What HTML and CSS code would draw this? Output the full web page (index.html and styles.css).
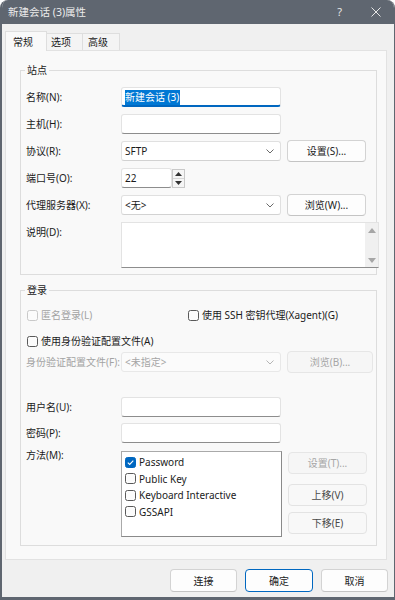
FILE: index.html
```html
<!DOCTYPE html>
<html lang="zh-CN">
<head>
<meta charset="utf-8">
<title>新建会话 (3)属性</title>
<link rel="stylesheet" href="styles.css">
</head>
<body>
<div class="window">
  <div class="titlebar">
    <span class="title">新建会话 (3)属性</span>
    <span class="tb-help">?</span>
    <svg class="tb-close" width="10" height="10" viewBox="0 0 10 10"><path d="M0.5 0.5 L9.5 9.5 M9.5 0.5 L0.5 9.5" stroke="#e6e6e6" stroke-width="1" fill="none"/></svg>
  </div>
  <div class="body">
    <div class="tabs">
      <div class="tab active">常规</div>
      <div class="tab t2">选项</div>
      <div class="tab t3">高级</div>
    </div>
    <div class="panel">
      <fieldset class="group site">
        <legend>站点</legend>
        <div class="row">
          <span class="lbl">名称(N):</span>
          <div class="field w160 focused"><span class="selected">新建会话 (3)</span></div>
        </div>
        <div class="row">
          <span class="lbl">主机(H):</span>
          <div class="field w160"></div>
        </div>
        <div class="row">
          <span class="lbl">协议(R):</span>
          <div class="select w160"><span class="val">SFTP</span><svg class="chev" width="8" height="5" viewBox="0 0 8 5"><path d="M0.5 0.5 L4 4 L7.5 0.5" stroke="#6a6a6a" fill="none" stroke-width="1"/></svg></div>
          <div class="btn side">设置(S)...</div>
        </div>
        <div class="row">
          <span class="lbl">端口号(O):</span>
          <div class="field w51">22</div>
          <div class="spin">
            <div class="spin-half"><svg width="7" height="4" viewBox="0 0 7 4"><path d="M0 4 L3.5 0 L7 4 Z" fill="#333"/></svg></div>
            <div class="spin-half"><svg width="7" height="4" viewBox="0 0 7 4"><path d="M0 0 L3.5 4 L7 0 Z" fill="#333"/></svg></div>
          </div>
        </div>
        <div class="row">
          <span class="lbl">代理服务器(X):</span>
          <div class="select w160"><span class="val">&lt;无&gt;</span><svg class="chev" width="8" height="5" viewBox="0 0 8 5"><path d="M0.5 0.5 L4 4 L7.5 0.5" stroke="#6a6a6a" fill="none" stroke-width="1"/></svg></div>
          <div class="btn side">浏览(W)...</div>
        </div>
        <div class="row tall">
          <span class="lbl top">说明(D):</span>
          <div class="textarea">
            <div class="ta-text"></div>
            <div class="scrollbar">
              <svg width="8" height="5" viewBox="0 0 8 5"><path d="M0 5 L4 0 L8 5 Z" fill="#a6a6a6"/></svg>
              <svg width="8" height="5" viewBox="0 0 8 5"><path d="M0 0 L4 5 L8 0 Z" fill="#a6a6a6"/></svg>
            </div>
          </div>
        </div>
      </fieldset>

      <fieldset class="group login">
        <legend>登录</legend>
        <div class="row chk-row first">
          <label class="check disabled w162"><span class="box"></span>匿名登录(L)</label>
          <label class="check"><span class="box"></span>使用 SSH 密钥代理(Xagent)(G)</label>
        </div>
        <div class="row chk-row r-profile">
          <label class="check"><span class="box"></span>使用身份验证配置文件(A)</label>
        </div>
        <div class="row r-profsel">
          <span class="lbl disabled-text">身份验证配置文件(F):</span>
          <div class="select w160 disabled"><span class="val">&lt;未指定&gt;</span><svg class="chev" width="8" height="5" viewBox="0 0 8 5"><path d="M0.5 0.5 L4 4 L7.5 0.5" stroke="#b5b5b5" fill="none" stroke-width="1"/></svg></div>
          <div class="btn side wide disabled">浏览(B)...</div>
        </div>
        <div class="row r-user">
          <span class="lbl">用户名(U):</span>
          <div class="field w160"></div>
        </div>
        <div class="row r-pass">
          <span class="lbl">密码(P):</span>
          <div class="field w160"></div>
        </div>
        <div class="row r-method">
          <span class="lbl top-up">方法(M):</span>
          <div class="listbox">
            <div class="item"><span class="box checked"><svg width="9" height="9" viewBox="0 0 9 9"><path d="M1.8 4.6 L3.7 6.4 L7.3 2.6" stroke="#fff" stroke-width="1.1" fill="none"/></svg></span>Password</div>
            <div class="item"><span class="box"></span>Public Key</div>
            <div class="item"><span class="box"></span>Keyboard Interactive</div>
            <div class="item"><span class="box"></span>GSSAPI</div>
          </div>
          <div class="side-col">
            <div class="btn side disabled">设置(T)...</div>
            <div class="btn side muted b-up">上移(V)</div>
            <div class="btn side muted b-down">下移(E)</div>
          </div>
        </div>
      </fieldset>
    </div>
    <div class="footer">
      <div class="btn foot">连接</div>
      <div class="btn foot primary">确定</div>
      <div class="btn foot">取消</div>
    </div>
  </div>
</div>
</body>
</html>
```

FILE: styles.css
```css
* { box-sizing: border-box; }
html, body { margin: 0; padding: 0; background: #ffffff; }
body {
  font-family: "Noto Sans", "Noto Sans CJK SC", sans-serif;
  font-size: 10px;
  line-height: 14px;
  color: #1b1b1b;
}

.window {
  width: 395px;
  height: 600px;
  display: flex;
  flex-direction: column;
  background: #f0f0f0;
  border-style: solid;
  border-color: #5f6670;
  border-width: 0 1px 3px 2px;
  border-radius: 8px 8px 0 0;
  overflow: hidden;
}

.titlebar {
  flex: none;
  height: 24px;
  background: #5f6670;
  color: #ececec;
  display: flex;
  align-items: center;
  padding-left: 6px;
}
.title { flex: 1; font-size: 10.5px; }
.tb-help { font-size: 11px; margin-right: 29px; color: #e6e6e6; }
.tb-close { margin-right: 13px; }

.body {
  flex: 1;
  display: flex;
  flex-direction: column;
  padding: 7px 7px 0 3px;
}

.tabs {
  display: flex;
  align-items: flex-end;
  height: 20px;
  margin-bottom: -1px;
}
.tab {
  height: 18px;
  line-height: 17px;
  border: 1px solid #dedede;
  border-bottom: none;
  background: #f4f4f4;
  padding-left: 4px;
  margin-left: -1px;
}
.tab.active {
  height: 20px;
  line-height: 20px;
  width: 42px;
  padding-left: 7px;
  background: #f9f9f9;
  margin-left: 0;
  position: relative;
  z-index: 1;
}
.tab.t2 { width: 37px; }
.tab.t3 { width: 38px; padding-left: 5px; }

.panel {
  flex: none;
  height: 510px;
  background: #f9f9f9;
  border: 1px solid #e2e2e2;
  padding: 12px 9px 0 14px;
}

.group {
  margin: 0;
  min-width: 0;
  border: 1px solid #dddddd;
  padding: 10px 0 6px 5px;
}
.group legend {
  padding: 0 2px;
  margin-left: -1px;
  line-height: 14px;
}
.group.login {
  margin-top: 8px;
  padding-top: 11px;
  padding-bottom: 8px;
}

.row {
  display: flex;
  align-items: center;
  height: 20px;
  margin-top: 7px;
}
.row:first-of-type { margin-top: 0; }
.row.tall { height: 46px; align-items: flex-start; }
.lbl { width: 95px; flex: none; white-space: nowrap; }
.lbl.top { padding-top: 3px; }
.lbl.top-up { margin-top: -3px; }

.field, .select {
  height: 20px;
  background: #ffffff;
  border: 1px solid #e3e3e3;
  border-bottom-color: #8d8d8d;
  border-radius: 3px;
  padding: 0 3px;
  display: flex;
  align-items: center;
  flex: none;
}
.w160 { width: 160px; }
.w51 { width: 51px; }
.field.focused {
  border-bottom: 2px solid #0067c0;
  padding-top: 1px;
}
.selected {
  background: #0078d4;
  color: #ffffff;
  line-height: 15px;
  padding: 0 1px 0 0;
}
.select {
  border-color: #e0e0e0;
  border-bottom-color: #d2d2d2;
  justify-content: space-between;
  padding-right: 6px;
}
.select.disabled { background: #fbfbfb; color: #a5a5a5; border-color: #e8e8e8; }

.spin {
  width: 13px;
  height: 19px;
  display: flex;
  flex-direction: column;
  border: 1px solid #c9c9c9;
  background: #f6f6f6;
  flex: none;
}
.spin-half {
  flex: 1;
  display: flex;
  align-items: center;
  justify-content: center;
}
.spin-half + .spin-half { border-top: 1px solid #d6d6d6; }

.textarea {
  width: 258px;
  height: 46px;
  background: #ffffff;
  border: 1px solid #e3e3e3;
  border-bottom-color: #8d8d8d;
  display: flex;
  flex: none;
}
.ta-text { flex: 1; }
.scrollbar {
  width: 13px;
  background: #f0f0f0;
  display: flex;
  flex-direction: column;
  justify-content: space-between;
  align-items: center;
  padding: 5px 0 4px;
}

.btn {
  height: 22px;
  border: 1px solid #d3d3d3;
  border-bottom-color: #c4c4c4;
  border-radius: 4px;
  background: #fdfdfd;
  display: flex;
  align-items: center;
  justify-content: center;
  flex: none;
  white-space: nowrap;
}
.btn.side { width: 79px; margin-left: 6px; }
.btn.side.wide { width: 86px; }
.btn.disabled {
  background: #f6f6f6;
  border-color: #e6e6e6;
  color: #a6a6a6;
}
.btn.muted {
  background: #f8f8f8;
  border-color: #e3e3e3;
  color: #4a4a4a;
}

.chk-row { height: 14px; }
.check {
  display: flex;
  align-items: center;
  white-space: nowrap;
}
.w162 { width: 162px; flex: none; }
.check .box, .item .box {
  width: 11px;
  height: 11px;
  border: 1px solid #595959;
  border-radius: 2.5px;
  background: #fbfbfb;
  margin-right: 3px;
  flex: none;
  display: flex;
  align-items: center;
  justify-content: center;
}
.check:first-child .box { margin-left: 1px; }
.check.disabled { color: #a3a3a3; }
.check.disabled .box { border-color: #c9c9c9; }
.disabled-text { color: #a3a3a3; }

.r-profile { margin-top: 12px; }
.r-profsel { margin-top: 4px; }
.r-user { margin-top: 25px; }
.r-pass { margin-top: 6px; }
.r-method { margin-top: 8px; height: 86px; align-items: flex-start; }

.listbox {
  width: 161px;
  height: 86px;
  background: #ffffff;
  border: 1px solid #8f8f8f;
  border-color: #a9a9a9 #8a8a8a #8a8a8a #a9a9a9;
  padding: 2px 0 0 3px;
  flex: none;
}
.item {
  height: 16.5px;
  display: flex;
  align-items: center;
  white-space: nowrap;
}
.item .box.checked {
  background: #0067c0;
  border-color: #0067c0;
}
.side-col {
  display: flex;
  flex-direction: column;
  padding-top: 1px;
}
.b-up { margin-top: 10px; }
.b-down { margin-top: 6px; }

.footer {
  display: flex;
  justify-content: flex-end;
  gap: 8px;
  margin-top: 9px;
  margin-right: -1px;
}
.btn.foot { width: 67px; height: 23px; }
.btn.foot.primary { border-color: #0067c0; width: 68px; }
```
